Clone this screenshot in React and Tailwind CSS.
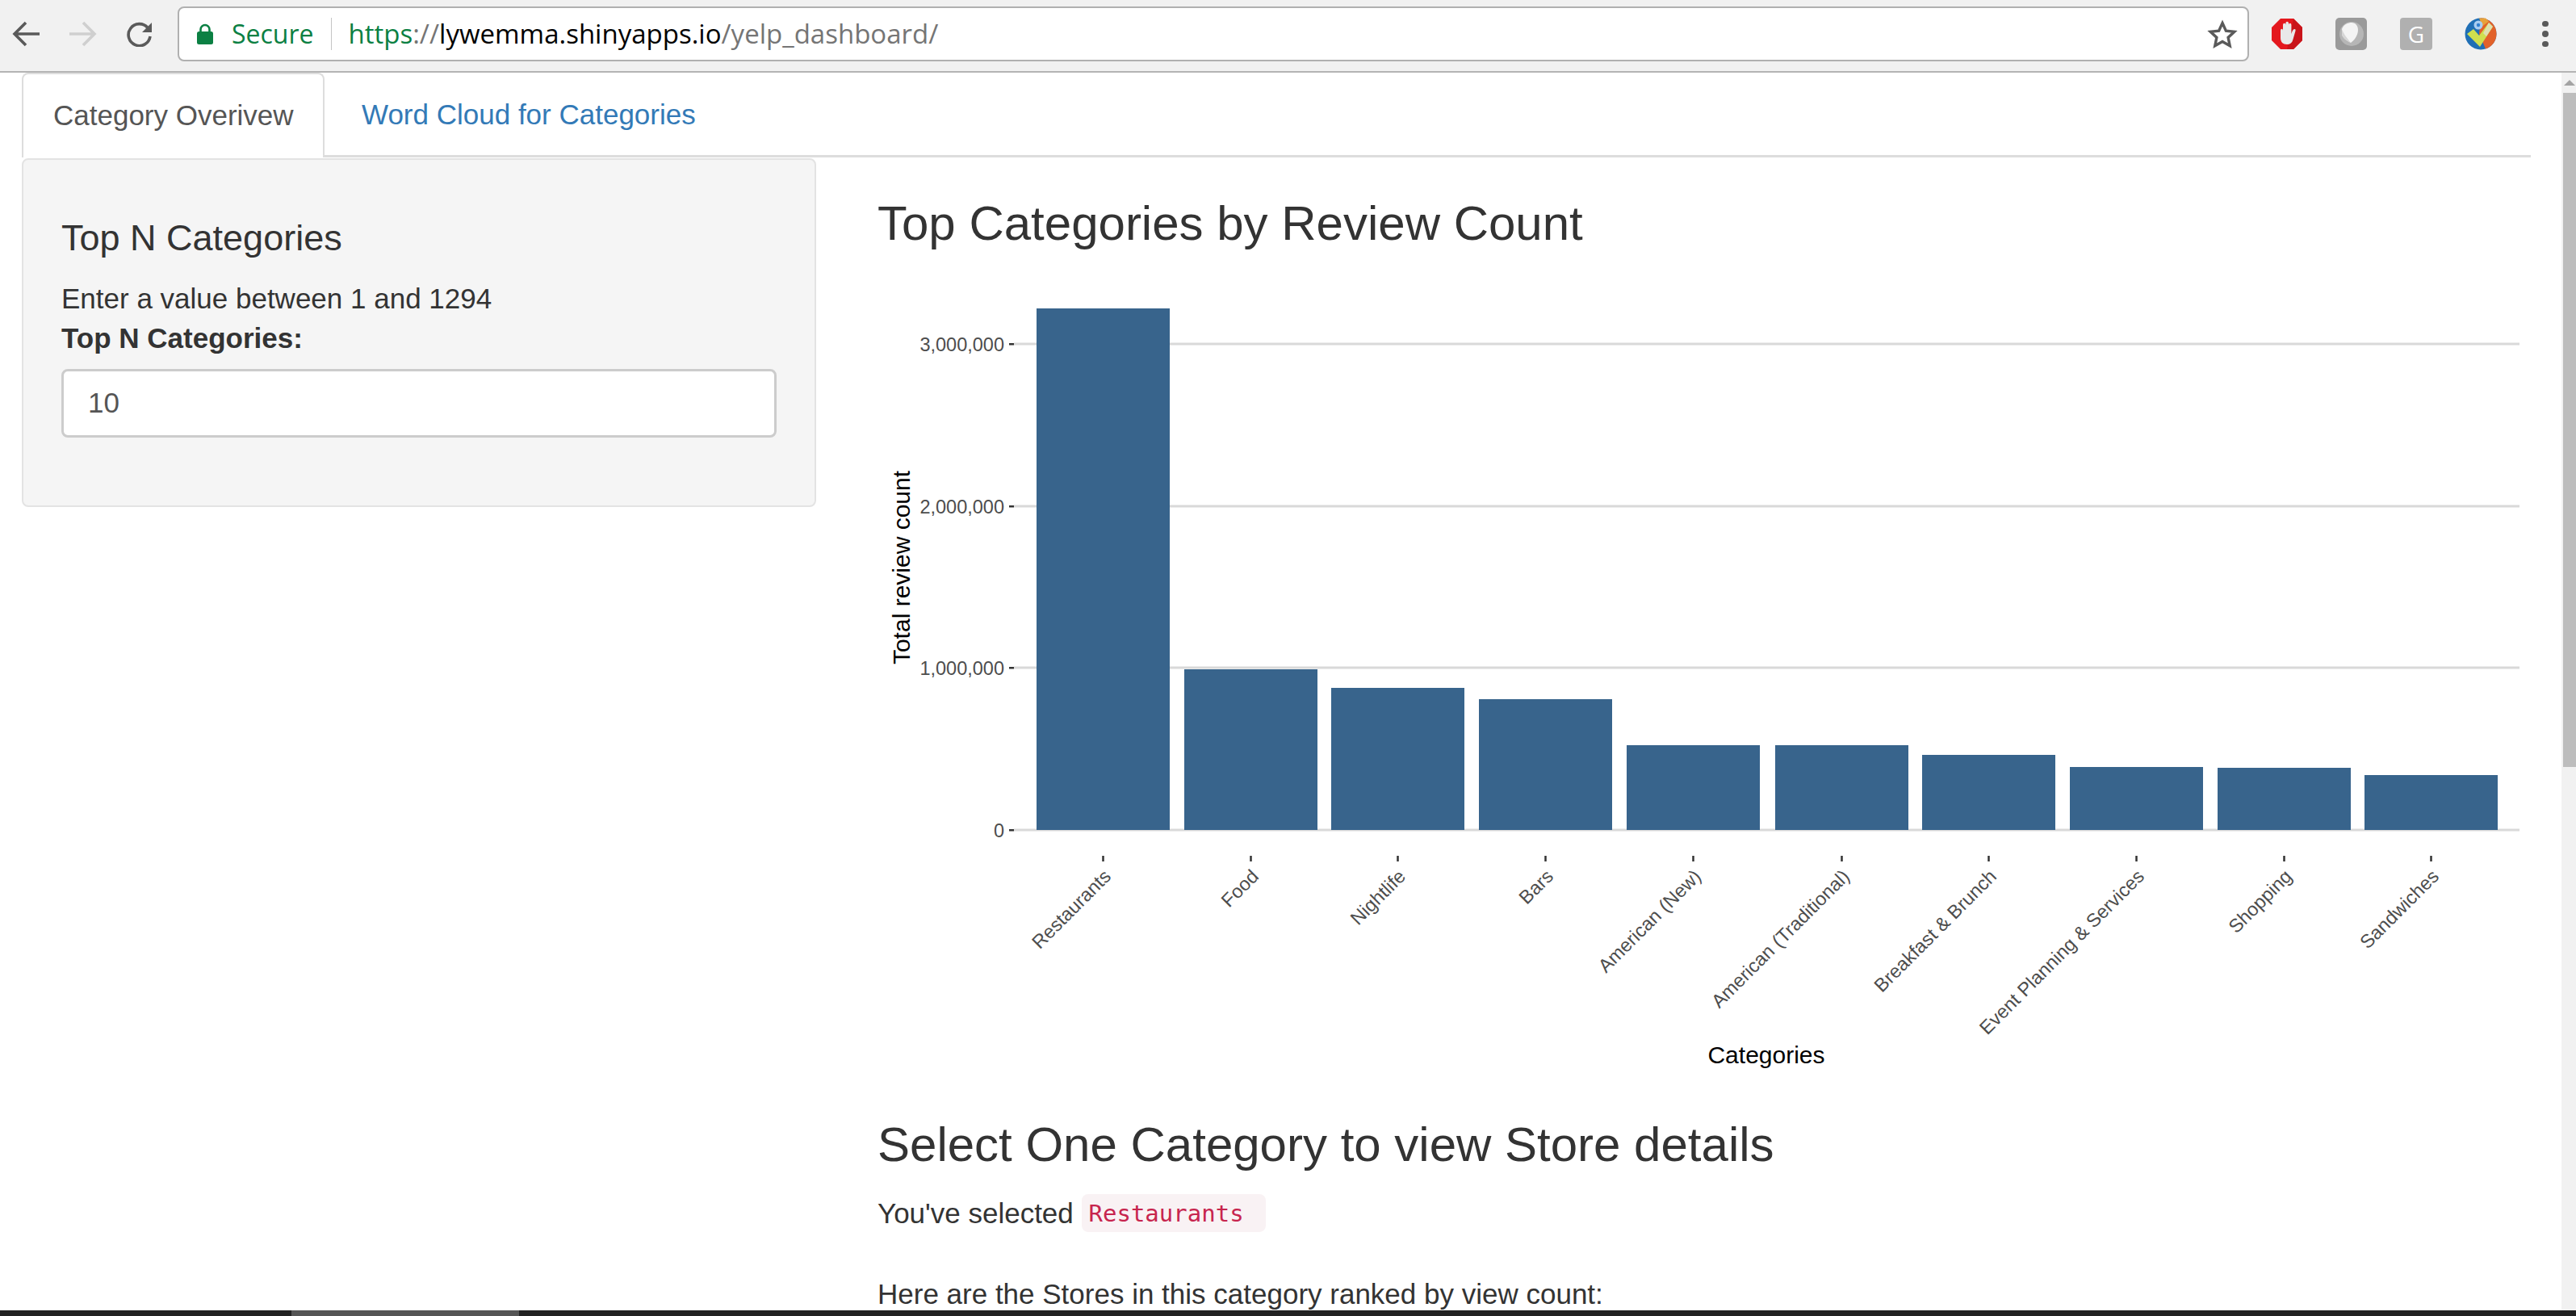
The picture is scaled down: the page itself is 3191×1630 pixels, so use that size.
import React from 'react';

const bars = [
  { name: 'Restaurants', x: 1284, top: 382 },
  { name: 'Food', x: 1467, top: 829 },
  { name: 'Nightlife', x: 1649, top: 852 },
  { name: 'Bars', x: 1832, top: 866 },
  { name: 'American (New)', x: 2015, top: 923 },
  { name: 'American (Traditional)', x: 2199, top: 923 },
  { name: 'Breakfast & Brunch', x: 2381, top: 935 },
  { name: 'Event Planning & Services', x: 2564, top: 950 },
  { name: 'Shopping', x: 2747, top: 951 },
  { name: 'Sandwiches', x: 2929, top: 960 },
];

const gridLines = [
  { label: '3,000,000', y: 426 },
  { label: '2,000,000', y: 627 },
  { label: '1,000,000', y: 827 },
  { label: '0', y: 1028 },
];

const BAR_WIDTH = 165;

// viewBox uses page coordinates so values read straight off the screenshot
const ReviewChart = () => (
  <svg viewBox="1087 340 2048 1000" className="block w-[2048px] h-[1000px]" style={{ fontFamily: '"Liberation Sans", Arial, sans-serif' }}>
    {gridLines.map((g) => (
      <g key={g.label}>
        <rect x="1256" y={g.y - 1.5} width="1865" height="3" fill="#d9d9d9" />
        <rect x="1250" y={g.y - 1} width="6" height="2.5" fill="#333333" />
        <text x="1244" y={g.y + 8.5} textAnchor="end" fontSize="23.5" fill="#4d4d4d">{g.label}</text>
      </g>
    ))}
    {bars.map((b) => {
      const cx = b.x + BAR_WIDTH / 2;
      return (
        <g key={b.name}>
          <rect x={b.x} y={b.top} width={BAR_WIDTH} height={1028 - b.top} fill="#38648c" />
          <rect x={cx - 1.25} y="1060" width="2.5" height="7" fill="#333333" />
          <text
            x={cx + 11}
            y="1087"
            textAnchor="end"
            fontSize="23.5"
            fill="#4d4d4d"
            transform={`rotate(-45 ${cx + 11} 1087)`}
          >
            {b.name}
          </text>
        </g>
      );
    })}
    <text x="1127" y="703" textAnchor="middle" fontSize="30" fill="#000000" transform="rotate(-90 1127 703)">Total review count</text>
    <text x="2188" y="1317" textAnchor="middle" fontSize="30" fill="#000000">Categories</text>
  </svg>
);

const BackArrow = ({ color, flip }) => (
  <svg width="36" height="32" viewBox="0 0 36 32" className={flip ? 'rotate-180' : ''} fill="none" stroke={color} strokeWidth="3.6">
    <path d="M35 16H4M18 2 4 16l14 14" />
  </svg>
);

const ReloadIcon = () => (
  <svg width="36" height="32" viewBox="0 0 36 32" fill="none">
    <path d="M27 8.5A13.5 13.5 0 1 0 30 19" stroke="#5a5a5a" strokeWidth="3.6" />
    <path d="M32 2V14H20Z" fill="#5a5a5a" />
  </svg>
);

const LockIcon = () => (
  <svg width="22" height="26" viewBox="0 0 22 26">
    <path d="M5.5 11V7.5a5.5 5.5 0 0 1 11 0V11" fill="none" stroke="#0b8043" strokeWidth="2.6" />
    <rect x="1" y="10" width="20" height="16" rx="2.5" fill="#0b8043" />
  </svg>
);

const StarIcon = () => (
  <svg width="38" height="36" viewBox="0 0 38 36" fill="none" stroke="#5a5a5a" strokeWidth="3.4">
    <path d="M19 4.5l4.4 9.6 10.4 1.2-7.7 7.1 2.1 10.3L19 27.5l-9.2 5.2 2.1-10.3-7.7-7.1 10.4-1.2z" />
  </svg>
);

const AdblockIcon = () => (
  <svg width="38" height="38" viewBox="0 0 38 38">
    <path d="M11 0h16l11 11v16L27 38H11L0 27V11z" fill="#e4181e" />
    <path d="M27 0l11 11v16L27 38H19z" fill="#c9141a" />
    <path
      d="M11 15c0-3 3-3 3 0v-7c0-3 3.4-3 3.4 0V6c0-3 3.6-3 3.6 0v2c0-3 3.4-3 3.4 0v11c1-3 2-6 4-6 1.6 0 1.4 2 .6 4l-2.6 9c-1 4-3.6 6-7.4 6-5 0-8-3-8-8z"
      fill="#e9e9e9"
    />
  </svg>
);

const ShieldIcon = () => (
  <svg width="39" height="40" viewBox="0 0 39 40">
    <rect width="39" height="40" rx="5" fill="#9a9a9a" />
    <circle cx="20" cy="20" r="15" fill="#b6b6b6" />
    <path d="M8 14c2-6 8-8 12-8 5 0 8 4 8 9 0 8-6 14-9 16-3-2-9-4-11-10z" fill="#f4f4f4" />
    <path d="M8 14c2 6 7 12 11 17-3-2-9-4-11-10z" fill="#d6d6d6" />
  </svg>
);

const CheckBadgeIcon = () => (
  <svg width="40" height="40" viewBox="0 0 40 40">
    <circle cx="20" cy="20" r="19.5" fill="#1f6fb5" />
    <path d="M20 .5A19.5 19.5 0 0 1 39.5 20 19.5 19.5 0 0 1 26 38.5L18 20z" fill="#e2622a" />
    <path d="M18 .5h8l4 4-8 6z" fill="#e7a13a" />
    <circle cx="17" cy="9" r="5.5" fill="#a9cdf0" />
    <circle cx="17" cy="9" r="2.2" fill="#2f7fd0" />
    <path d="M3 20l8-6 7 8L30 6l5 5-16 25z" fill="#cfe04f" />
    <path d="M30 6l5 5-8 12-4-4z" fill="#dfe0b0" />
  </svg>
);

const ChromeBar = () => (
  <div className="flex items-center h-[90px] shrink-0 bg-[#f1f1f1] border-b-2 border-[#b4b4b4] pb-[4px]">
    <div className="ml-[14px]"><BackArrow color="#5a5a5a" /></div>
    <div className="ml-[35px]"><BackArrow color="#cfcfcf" flip /></div>
    <div className="ml-[35px]"><ReloadIcon /></div>
    <div className="ml-[28px] w-[2566px] h-[68px] flex items-center bg-white border-2 border-[#b0b0b0] rounded-[8px] relative" style={{ fontFamily: '"Open Sans", sans-serif' }}>
      <div className="ml-[21px]"><LockIcon /></div>
      <span className="ml-[22px] text-[32px] text-[#0b8043]">Secure</span>
      <div className="ml-[21px] w-[1px] h-[40px] bg-[#c4c4c4]"></div>
      <span className="ml-[21px] text-[33px] whitespace-nowrap">
        <span className="text-[#0b8043]">https</span>
        <span className="text-[#757575]">://</span>
        <span className="text-black">lywemma.shinyapps.io</span>
        <span className="text-[#757575]">/yelp_dashboard/</span>
      </span>
      <div className="ml-auto mr-[12px]"><StarIcon /></div>
    </div>
    <div className="ml-[28px]"><AdblockIcon /></div>
    <div className="ml-[41px]"><ShieldIcon /></div>
    <div className="ml-[41px] w-[40px] h-[40px] flex items-center justify-center bg-[#b0b0b0] rounded-[4px] text-white text-[28px]" style={{ fontFamily: '"Open Sans", sans-serif' }}>G</div>
    <div className="ml-[40px]"><CheckBadgeIcon /></div>
    <div className="ml-[56px] flex flex-col gap-[5px]">
      <div className="w-[7.5px] h-[7.5px] rounded-full bg-[#5a5a5a]"></div>
      <div className="w-[7.5px] h-[7.5px] rounded-full bg-[#5a5a5a]"></div>
      <div className="w-[7.5px] h-[7.5px] rounded-full bg-[#5a5a5a]"></div>
    </div>
  </div>
);

const Tabs = () => (
  <div className="flex h-[105px] border-b-[3px] border-[#dddddd] text-[35px]">
    <div className="relative h-[105px] w-[375px] flex items-center pl-[37px] bg-white border-2 border-b-0 border-[#dddddd] rounded-t-[8px] text-[#555555]">
      Category Overivew
    </div>
    <div className="h-[105px] flex items-center ml-[46px] text-[#337ab7]">Word Cloud for Categories</div>
  </div>
);

const Sidebar = () => (
  <div className="w-[984px] h-[432px] mt-[1px] shrink-0 bg-[#f5f5f5] border-2 border-[#e3e3e3] rounded-[8px] pl-[47px] pr-[47px] pt-[73px]">
    <h3 className="text-[45px] leading-[48px] text-[#333333]">Top N Categories</h3>
    <p className="mt-[27px] text-[35px] leading-[48px]">Enter a value between 1 and 1294</p>
    <label className="block mt-[1px] text-[35px] leading-[48px] font-bold">Top N Categories:</label>
    <div className="mt-[14px] h-[85px] flex items-center pl-[30px] bg-white border-[3px] border-[#cccccc] rounded-[8px] text-[35px] text-[#555555]">10</div>
  </div>
);

const Scrollbar = () => (
  <div className="w-[18px] shrink-0 bg-[#f1f1f1] flex flex-col items-end">
    <div className="w-[16px] h-[25px] flex items-center justify-center">
      <div className="w-0 h-0 border-x-[7px] border-x-transparent border-b-[7px] border-b-[#a3a3a3]"></div>
    </div>
    <div className="w-[16px] h-[835px] bg-[#bdbdbd]"></div>
  </div>
);

export default function App() {
  return (
    <div className="flex flex-col h-[1630px] overflow-hidden bg-white text-[#333333]" style={{ fontFamily: '"Liberation Sans", Arial, sans-serif' }}>
      <ChromeBar />
      <div className="flex flex-1 min-h-0">
        <div className="flex-1 min-w-0 pl-[27px] pr-[38px] overflow-hidden">
          <Tabs />
          <div className="flex">
            <Sidebar />
            <div className="ml-[76px] flex-1 min-w-0">
              <h2 className="mt-[49px] text-[60px] leading-[66px] text-[#333333]">Top Categories by Review Count</h2>
              <div className="mt-[30px]"><ReviewChart /></div>
              <h2 className="mt-[45px] text-[60px] leading-[66px] text-[#333333]">Select One Category to view Store details</h2>
              <p className="mt-[28px] text-[35px] leading-[48px]">
                You've selected{' '}
                <code className="inline-block pl-[9px] pr-[27px] h-[47px] leading-[49px] align-top bg-[#f9f2f4] text-[#c7254e] text-[29px] rounded-[8px]" style={{ fontFamily: '"DejaVu Sans Mono", monospace' }}>Restaurants</code>
              </p>
              <p className="mt-[52px] text-[35px] leading-[48px]">Here are the Stores in this category ranked by view count:</p>
            </div>
          </div>
        </div>
        <Scrollbar />
      </div>
      <div className="h-[7px] shrink-0 flex bg-[#222222]">
        <div className="ml-[361px] w-[282px] bg-[#555555]"></div>
      </div>
    </div>
  );
}
